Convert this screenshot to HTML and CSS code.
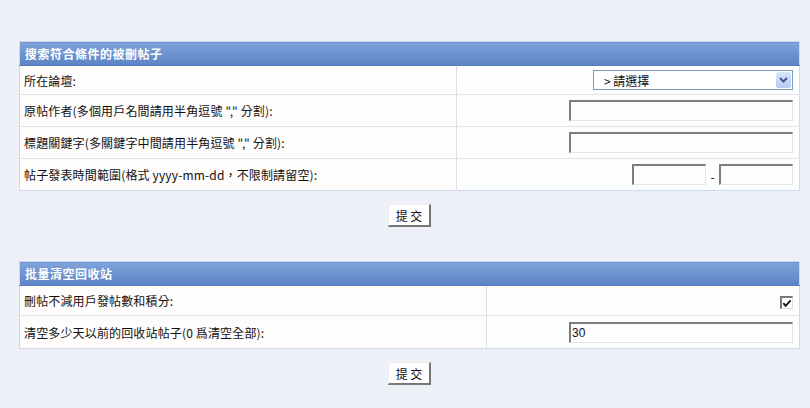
FILE: index.html
```html
<!DOCTYPE html>
<html>
<head>
<meta charset="utf-8">
<link rel="stylesheet" href="styles.css">
</head>
<body>
<div class="page">
  <form class="block">
    <table class="tb tb1">
      <tr><th colspan="2">搜索符合條件的被刪帖子</th></tr>
      <tr class="r1">
        <td class="lab">所在論壇:</td>
        <td class="val"><span class="sel"><span class="sel-text">&gt; 請選擇</span><span class="sel-btn"><svg width="9" height="6" viewBox="0 0 9 6"><path d="M1 1 L4.5 4.5 L8 1" fill="none" stroke="#3d5a8f" stroke-width="2"/></svg></span></span></td>
      </tr>
      <tr class="r2">
        <td class="lab">原帖作者(多個用戶名間請用半角逗號 "," 分割):</td>
        <td class="val"><span class="inp w223"></span></td>
      </tr>
      <tr class="r2">
        <td class="lab">標題關鍵字(多關鍵字中間請用半角逗號 "," 分割):</td>
        <td class="val"><span class="inp w223"></span></td>
      </tr>
      <tr class="r3">
        <td class="lab">帖子發表時間範圍(格式 yyyy-mm-dd，不限制請留空):</td>
        <td class="val"><span class="inp w73"></span><span class="dash">-</span><span class="inp w73"></span></td>
      </tr>
    </table>
    <div class="btnrow"><span class="btn">提 交</span></div>
  </form>
  <form class="block block2">
    <table class="tb tb2">
      <tr><th colspan="2">批量清空回收站</th></tr>
      <tr class="r1b">
        <td class="lab">刪帖不減用戶發帖數和積分:</td>
        <td class="val"><span class="chk"><svg width="11" height="9" viewBox="0 0 11 9"><path d="M1.5 4 L4 7 L9.5 1" fill="none" stroke="#111" stroke-width="2"/></svg></span></td>
      </tr>
      <tr class="r2b">
        <td class="lab">清空多少天以前的回收站帖子(0 爲清空全部):</td>
        <td class="val"><span class="inp w223 txt">30</span></td>
      </tr>
    </table>
    <div class="btnrow"><span class="btn">提 交</span></div>
  </form>
</div>
</body>
</html>
```
FILE: styles.css
```css
html, body {
  margin: 0;
  padding: 0;
  background: #eef0f8;
}
body {
  font-family: "Noto Sans CJK TC", "Liberation Sans", sans-serif;
  font-size: 12px;
  color: #111;
}
.page {
  padding: 41px 0 0 19px;
  width: 781px;
}
.block2 {
  margin-top: 34px;
}
.tb {
  width: 781px;
  border-collapse: collapse;
  border: 1px solid #cfd9ea;
  background: #fff;
}
.tb th {
  height: 23px;
  padding: 0 0 0 5px;
  text-align: left;
  color: #fff;
  font-weight: bold;
  font-size: 12px;
  letter-spacing: 0.5px;
  background: linear-gradient(#7fa3da, #5c84c5);
  border: 1px solid #cfd9ea;
  border-bottom: 1px solid #5a7fbd;
}
.tb td {
  border-bottom: 1px solid #dfe4ee;
  padding: 0 6px 0 4px;
  vertical-align: middle;
}
.tb td.lab {
  background: #fffcfc;
  border-right: 1px solid #dcdfe6;
  letter-spacing: 0.15px;
}
.tb td.val {
  text-align: right;
  background: #fdfefe;
}
.tb1 td.lab { width: 426px; }
.tb2 td.lab { width: 456px; }
.r1 td { height: 28px; }
.r2 td { height: 31px; }
.r3 td { height: 31px; }
.r1b td { height: 29px; }
.r2b td { height: 32px; }
.tb tr:last-child td { border-bottom: none; }

.sel {
  display: inline-flex;
  align-items: center;
  justify-content: space-between;
  box-sizing: border-box;
  width: 200px;
  height: 20px;
  border: 1px solid #7f9db9;
  background: #fff;
  vertical-align: middle;
  text-align: left;
}
.sel-text {
  padding-left: 10px;
}
.sel-btn {
  width: 15px;
  height: 16px;
  margin-right: 1px;
  background: linear-gradient(#d9e5fb, #b7cbf2);
  border-radius: 2px;
  display: flex;
  align-items: center;
  justify-content: center;
}
.inp {
  display: inline-block;
  box-sizing: border-box;
  height: 21px;
  border-top: 2px solid #7d7d7d;
  border-left: 2px solid #7d7d7d;
  border-right: 1px solid #e8e4e4;
  border-bottom: 1px solid #e8e4e4;
  background: #fffcfc;
  vertical-align: middle;
  text-align: left;
  line-height: 18px;
}
.w223 { width: 224px; }
.w73 { width: 74px; }
.txt { padding-left: 1px; font-family: "Liberation Sans", sans-serif; font-size: 12px; }
.dash {
  display: inline-block;
  width: 13px;
  text-align: center;
  vertical-align: middle;
  padding-top: 3px;
}
.chk {
  display: inline-flex;
  align-items: center;
  justify-content: center;
  box-sizing: border-box;
  width: 13px;
  height: 13px;
  border-top: 2px solid #777;
  border-left: 2px solid #777;
  border-right: 1px solid #ddd;
  border-bottom: 1px solid #ddd;
  background: #fff;
  vertical-align: middle;
}
.btnrow {
  display: flex;
  justify-content: center;
  padding-top: 13px;
  width: 781px;
}
.btn {
  display: inline-flex;
  align-items: center;
  justify-content: center;
  box-sizing: border-box;
  width: 43px;
  height: 23px;
  background: #fff;
  border-top: 1px solid #eee;
  border-left: 1px solid #eee;
  border-right: 2px solid #777;
  border-bottom: 2px solid #777;
  font-size: 12px;
}
```
